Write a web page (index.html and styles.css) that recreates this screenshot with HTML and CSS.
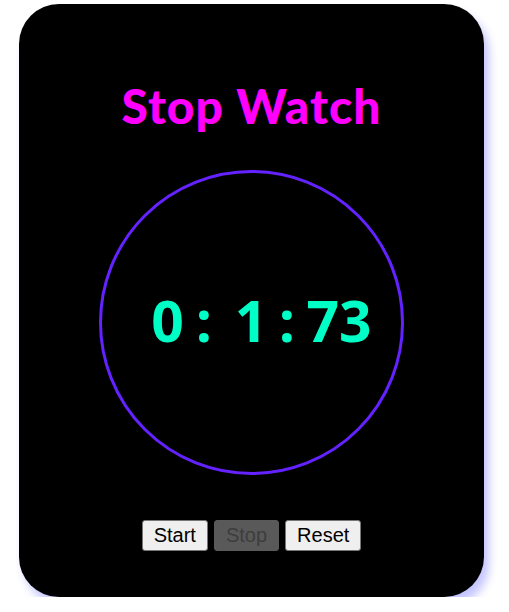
FILE: index.html
```html
<!DOCTYPE html>
<html>
<head>
<meta charset="utf-8">
<link rel="stylesheet" href="styles.css">
</head>
<body>
<div class="card">
  <h1 class="title">Stop Watch</h1>
  <div class="dial">
    <div class="time">
      <span class="seg seg-min">0</span>
      <span class="seg seg-c1">:</span>
      <span class="seg seg-sec">1</span>
      <span class="seg seg-c2">:</span>
      <span class="seg seg-ms">73</span>
    </div>
  </div>
  <div class="controls">
    <button class="btn">Start</button>
    <button class="btn" disabled>Stop</button>
    <button class="btn">Reset</button>
  </div>
</div>
</body>
</html>
```

FILE: styles.css
```css
html, body {
  margin: 0;
  background: #ffffff;
}
body {
  padding: 4px 0 0 19px;
}
.card {
  box-sizing: border-box;
  width: 465px;
  height: 593px;
  background: #000;
  border-radius: 40px;
  box-shadow: 5px 8px 10px #c4c4ff;
  padding-top: 74px;
  display: flex;
  flex-direction: column;
  align-items: center;
}
.title {
  margin: 0;
  font-family: Lato, "Noto Sans", sans-serif;
  font-weight: 900;
  font-size: 48px;
  letter-spacing: 1px;
  line-height: 56px;
  color: #ff00ff;
}
.dial {
  box-sizing: border-box;
  margin-top: 36px;
  width: 305px;
  height: 305px;
  border: 3px solid #6322ff;
  border-radius: 50%;
  display: flex;
  align-items: center;
  justify-content: center;
}
.time {
  display: flex;
  padding-left: 20px;
  margin-top: -5px;
  font-family: "Open Sans", sans-serif;
  font-weight: 700;
  font-size: 57px;
  line-height: 1;
  color: #00ffc6;
}
.seg { text-align: center; }
.seg-min { width: 40px; }
.seg-c1 { width: 33px; }
.seg-sec { width: 41px; margin-left: 10px; }
.seg-c2 { width: 31px; }
.seg-ms { width: 73px; }
.controls {
  margin-top: 45px;
  display: flex;
  gap: 6px;
}
.btn {
  font-family: "Liberation Sans", Arial, sans-serif;
  font-size: 20px;
  line-height: 21px;
  padding: 4px 11px;
  border: 1px solid #767676;
  border-radius: 3px;
  background: #efefef;
  color: #000;
}
.btn:disabled {
  background: #595959;
  border-color: #595959;
  color: #3d3d3d;
}
```
